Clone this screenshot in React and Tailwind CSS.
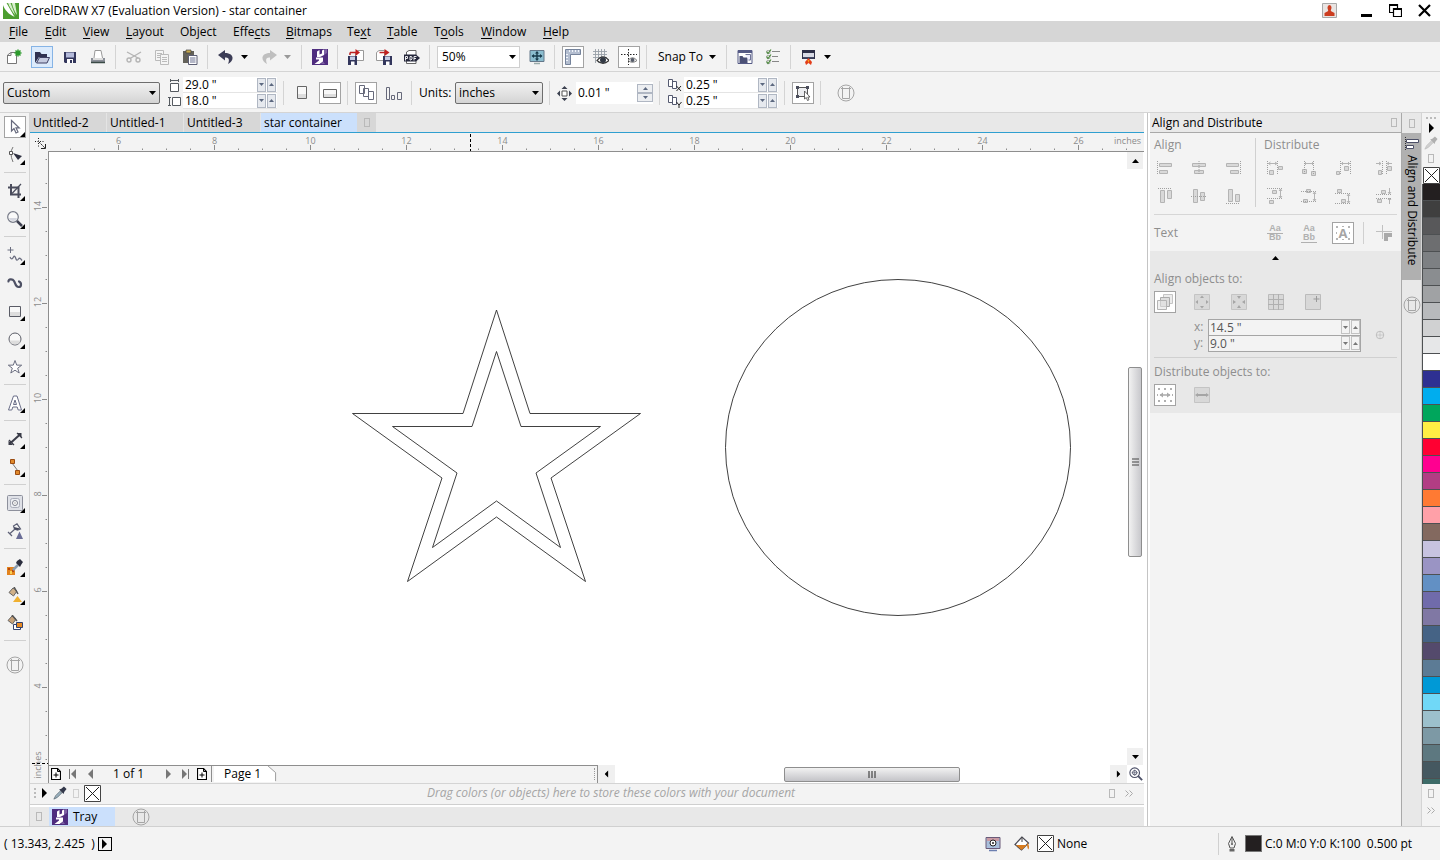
import React from "react";

/* ---------- small drawing helpers ---------- */

function Icon({ children, className = "size-4" }) {
  return (
    <svg viewBox="0 0 16 16" className={className + " shrink-0"} fill="none" aria-hidden="true">
      {children}
    </svg>
  );
}

function Caret({ dir = "down", className = "text-black" }) {
  const d = {
    down: "M0 0h7L3.5 4z",
    up: "M0 4h7L3.5 0z",
  }[dir];
  return (
    <svg viewBox="0 0 7 4" className={"h-1 w-[7px] shrink-0 " + className} aria-hidden="true">
      <path d={d} fill="currentColor" />
    </svg>
  );
}

function Side({ dir = "right", className = "text-black" }) {
  return (
    <svg viewBox="0 0 5 10" className={"h-2.5 w-[5px] shrink-0 " + className} aria-hidden="true">
      <path d={dir === "right" ? "M0 0v10l5-5z" : "M5 0v10L0 5z"} fill="currentColor" />
    </svg>
  );
}

function Sep() {
  return <div className="h-6 w-0.5 shrink-0 border-l border-[#d4d4d4]" />;
}

function Btn({ label, on, open, children }) {
  const look = open
    ? "border-[#86b4e6] bg-[#dcebfc]"
    : on
    ? "border-[#a3a3a3] bg-white"
    : "border-transparent";
  return (
    <button
      type="button"
      aria-label={label}
      className={"flex size-[22px] shrink-0 items-center justify-center border " + look}
    >
      {children}
    </button>
  );
}

function RoundMark() {
  return (
    <svg viewBox="0 0 18 18" className="size-[18px] shrink-0" fill="none" stroke="#a5a5a5" aria-hidden="true">
      <circle cx="9" cy="9" r="8" />
      <path d="M5.500 4.500h7v10h-7zM4 4.500h10M5.500 3v1.500M12.500 3v1.500" />
    </svg>
  );
}

function Slot() {
  return <span className="h-[9px] w-1.5 shrink-0 border border-[#b9b9b9]" />;
}

function NoColor({ className = "size-[17px]" }) {
  return (
    <svg viewBox="0 0 17 17" className={className + " shrink-0"} aria-hidden="true">
      <path d="M.5.5h16v16H.5z" fill="#fff" stroke="#444" />
      <path d="M2 2l13 13M15 2L2 15" stroke="#222" fill="none" />
    </svg>
  );
}

function Launcher() {
  return (
    <Icon>
      <path d="M0 0h16v16H0z" fill="#4f2d7f" />
      <path d="M5 2.500L7.500 1v4.500L10 4.500V1.500L12 .5v5.500L8 8H5z" fill="#fff" />
      <path d="M4 8.500h7v4L7.500 15H2.500l4.500-3.500v-1H4z" fill="#fff" />
      <path d="M12 .5L15 0v4l-3 2z" fill="#7d62a3" />
      <path d="M11 12.500l2 2.500H9z" fill="#7d62a3" />
    </Icon>
  );
}

/* ---------- title and menus ---------- */

function TitleBar() {
  return (
    <header className="flex h-[21px] shrink-0 items-center bg-white pl-[3px] pr-[9px]">
      <svg viewBox="0 0 16 16" className="mr-[5px] size-4" aria-hidden="true">
        <path d="M0 0h16v16H0z" fill="#4c9d2f" />
        <path d="M0 0h4l8 14C6 12 1 6 0 2z" fill="#fff" />
        <path d="M5 0h3l5 13C9 9 6 4 5 0zM9 0h3l2 12C11 8 9 4 9 0z" fill="#d8efcd" />
        <path d="M4 0l8 14M8 0l5 13" stroke="#4c9d2f" strokeWidth=".8" />
      </svg>
      <h1 className="flex-1">CorelDRAW X7 (Evaluation Version) - star container</h1>
      <svg viewBox="0 0 15 15" className="mr-[23px] size-[15px]" aria-hidden="true">
        <path d="M.5.5h14v14H.5z" fill="#e9e4e2" stroke="#a8a8a8" />
        <path d="M5.500 4.500a2 2.500 0 0 1 4 0c0 1.500-.7 2.300-.7 3.500l3.700 2v3h-10v-3l3.700-2c0-1.200-.7-2-.7-3.500z" fill="#cc3d20" />
      </svg>
      <div className="flex items-center gap-4">
        <button type="button" aria-label="Minimize">
          <svg viewBox="0 0 13 13" className="size-[13px]"><path d="M1 10h11v3H1z" /></svg>
        </button>
        <button type="button" aria-label="Restore">
          <svg viewBox="0 0 13 13" className="size-[13px]" fill="none" stroke="#000" strokeWidth="1.2">
            <path d="M4 8.500H.5v-8h8V4M4.500 4.500h8v8h-8z" /><path d="M0 1h9M4 5h9" strokeWidth="2" />
          </svg>
        </button>
        <button type="button" aria-label="Close">
          <svg viewBox="0 0 13 13" className="size-[13px]"><path d="M1 1l11 11M12 1L1 12" stroke="#000" strokeWidth="2.200" /></svg>
        </button>
      </div>
    </header>
  );
}

const MENUS = [
  ["", "F", "ile", "w-9"],
  ["", "E", "dit", "w-[38px]"],
  ["", "V", "iew", "w-[43px]"],
  ["", "L", "ayout", "w-[54px]"],
  ["Ob", "j", "ect", "w-[53px]"],
  ["Effe", "c", "ts", "w-[53px]"],
  ["", "B", "itmaps", "w-[61px]"],
  ["Te", "x", "t", "w-10"],
  ["", "T", "able", "w-[47px]"],
  ["T", "o", "ols", "w-[47px]"],
  ["", "W", "indow", "w-[62px]"],
  ["", "H", "elp", "w-9"],
];

function MenuBar() {
  return (
    <nav className="flex h-[21px] shrink-0 items-center bg-[#d6d6d6] pl-[9px]">
      {MENUS.map(([a, key, b, w]) => (
        <button key={a + key + b} type="button" className={"shrink-0 whitespace-nowrap text-left " + w}>
          {a}
          <span className="underline underline-offset-2">{key}</span>
          {b}
        </button>
      ))}
    </nav>
  );
}

/* ---------- standard toolbar ---------- */

function StandardBar() {
  return (
    <div className="flex h-[30px] shrink-0 items-center gap-1.5 border-b border-[#d4d4d4] bg-[#f3f3f3] pl-[3px] pt-px">
      <Btn label="New">
        <Icon>
          <path d="M1.500 14.500V6L5 3.500h5.500v11z" fill="#fff" stroke="#777" />
          <path d="M1.500 6.500h3.500v-3" stroke="#777" />
          <path d="M12 .5v7M8.500 4h7M9.500 1.500l5 5M14.500 1.500l-5 5" stroke="#2b9a2b" strokeWidth="1.500" />
        </Icon>
      </Btn>
      <Btn label="Open" open>
        <Icon>
          <path d="M1 14V3h5l1.500 2H13v3H5z" fill="#2f3150" />
          <path d="M5.500 8.500h10l-2.500 5.500H2.500z" fill="#c5cbe0" stroke="#3f4164" />
        </Icon>
      </Btn>
      <Btn label="Save">
        <Icon>
          <path d="M2 3h12v11H3l-1-1z" fill="#33365c" />
          <path d="M4 3.500h8v5H4z" fill="#b4bada" /><path d="M5 10h6v4H5z" fill="#fff" /><path d="M8 11h2v3H8z" fill="#33365c" />
        </Icon>
      </Btn>
      <Btn label="Print">
        <Icon>
          <path d="M4 9l1-7.500h6L12.500 9" fill="#fff" stroke="#999" />
          <path d="M1 9h14v4H1z" fill="#8b8f98" /><path d="M3 9h10v2H3z" fill="#ddd" /><path d="M1 13.500h14" stroke="#3a4a46" strokeWidth="1.500" />
        </Icon>
      </Btn>
      <Sep />
      <Btn label="Cut">
        <Icon>
          <g stroke="#b5b5b5" strokeWidth="1.400"><path d="M1 3l11 6M15 3L4 9.500" /><circle cx="3" cy="11" r="2" /><circle cx="12" cy="11" r="2" /></g>
        </Icon>
      </Btn>
      <Btn label="Copy">
        <Icon>
          <g stroke="#bbb"><path d="M1.500 1.500h8v10h-8z" fill="#f5f5f5" /><path d="M3 4.500h5M3 6.500h4M3 8.500h3" /><path d="M6.500 5.500h8v10h-8z" fill="#f5f5f5" /><path d="M8 8.500h5M8 10.500h5M8 12.500h5" /></g>
        </Icon>
      </Btn>
      <Btn label="Paste">
        <Icon>
          <path d="M1 2h11v12H1z" fill="#64625a" /><path d="M4 1h5v3H4z" fill="#c5a74c" stroke="#444" strokeWidth=".7" />
          <path d="M6.500 6.500h8.500v9H6.500z" fill="#fff" stroke="#5d5f75" /><path d="M8 9h5.500M8 11h5.500M8 13h5.500" stroke="#6b7190" />
        </Icon>
      </Btn>
      <Sep />
      <div className="flex w-[37px] items-center">
        <Btn label="Undo">
          <Icon><path d="M7 1L0 6l7 5.500V8.500c3.500-.5 5 1.500 3 6.500C16.500 12 16.500 4 7 4z" fill="#3c3d56" /></Icon>
        </Btn>
        <button type="button" aria-label="Undo list" className="flex w-[15px] justify-center"><Caret /></button>
      </div>
      <div className="flex w-[37px] items-center">
        <Btn label="Redo">
          <Icon><path d="M9 1l7 5-7 5.500V8.500c-3.500-.5-5 1.500-3 6.500C-.5 12-.5 4 9 4z" fill="#bfbfbf" /></Icon>
        </Btn>
        <button type="button" aria-label="Redo list" className="flex w-[15px] justify-center"><Caret className="text-[#999]" /></button>
      </div>
      <Sep />
      <Btn label="Search content"><Launcher /></Btn>
      <Sep />
      <Btn label="Import">
        <Icon>
          <path d="M7.500 11.500v-8L10 1.500h5.500v10z" fill="#fff" stroke="#999" />
          <path d="M0 7h9v9H0z" fill="#33365c" /><path d="M2 7.500h5V11H2z" fill="#c4cae2" /><path d="M3 12.500h3.500V16H3z" fill="#fff" />
          <path d="M2 3.500V6M2 3.500h6" stroke="#b22" strokeWidth="1.500" /><path d="M7.500 0l4.500 3.500L7.500 7z" fill="#c01f1f" />
        </Icon>
      </Btn>
      <Btn label="Export">
        <Icon>
          <path d="M.5 11.500v-8L3 1.500h5.500v10z" fill="#fff" stroke="#999" />
          <path d="M7 7h9v9H7z" fill="#33365c" /><path d="M9 7.500h5V11H9z" fill="#c4cae2" /><path d="M10 12.500h3.500V16H10z" fill="#fff" />
          <path d="M3.500 3.500h6" stroke="#b22" strokeWidth="1.500" /><path d="M8.500 0l5 3.500-5 3.500z" fill="#c01f1f" />
        </Icon>
      </Btn>
      <Btn label="Publish to PDF">
        <Icon>
          <path d="M2.500 14.500V3L5 1.500h7v13z" fill="#fff" stroke="#666" />
          <path d="M0 5.500h12l4 3.500-4 3.500H0z" fill="#26283c" />
          <path d="M1.500 11.500v-4h2v2h-2M6 7.500v3.500h1l1-1V8L7 7.500zM10 11.500v-4h2.500M10 9.500h2" stroke="#fff" strokeWidth=".9" />
        </Icon>
      </Btn>
      <Sep />
      <div className="relative h-[22px] w-[83px] shrink-0">
        <select aria-label="Zoom level" className="h-full w-full appearance-none border border-[#cfcfcf] bg-white pl-1">
          <option>50%</option>
        </select>
        <span className="pointer-events-none absolute inset-y-0 right-1 flex items-center"><Caret /></span>
      </div>
      <Btn label="Full-screen preview">
        <Icon>
          <path d="M1 1.500h14v11H1z" fill="#8bbdcf" stroke="#64788a" /><path d="M5 14.500h6" stroke="#9aa" strokeWidth="1.500" />
          <path d="M8 3v8M3.500 7h9" stroke="#173a4b" strokeWidth="1.400" />
          <path d="M8 2L6 4.500h4zM8 12l-2-2.500h4zM2.500 7L5 5v4zM13.500 7L11 5v4z" fill="#173a4b" />
        </Icon>
      </Btn>
      <Sep />
      <Btn label="Show rulers" on>
        <Icon>
          <path d="M.5.5h15v5h-10v10h-5z" fill="#b4bed0" stroke="#75839b" />
          <path d="M4.500 1v2M7.500 1v2M10.500 1v2M13.500 1v2M1 5.500h2M1 8.500h2M1 11.500h2" stroke="#f0f4fa" />
        </Icon>
      </Btn>
      <Btn label="Show grid">
        <Icon>
          <path d="M2.500 0v14M5.500 0v14M8.500 0v14M11.500 0v14M0 2.500h14M0 5.500h14M0 8.500h14" stroke="#98a0a8" strokeWidth=".9" />
          <path d="M4 11.500Q10 4 16 11.500 10 17 4 11.500z" fill="#fff" stroke="#333" strokeWidth="1.200" /><circle cx="10" cy="11" r="3" fill="#333a45" />
        </Icon>
      </Btn>
      <Btn label="Show guidelines" on>
        <Icon>
          <path d="M7.500 0v16M0 5.500h16" stroke="#222" strokeDasharray="1.500 1.500" />
          <path d="M7 11.500Q11.500 6 16 11.500 11.500 15 7 11.500z" fill="#fff" stroke="#777" /><circle cx="11.500" cy="11" r="2" fill="#555b68" />
        </Icon>
      </Btn>
      <Sep />
      <button type="button" className="flex w-[66px] shrink-0 items-center justify-between whitespace-nowrap pl-1 pr-1">
        Snap To <Caret className="text-black" />
      </button>
      <Sep />
      <Btn label="Options">
        <Icon>
          <path d="M1 1.500h14v13H1z" fill="#fff" stroke="#555a85" /><path d="M1 1h14v3H1z" fill="#555a85" />
          <path d="M2.500 7h3l1 1.500h4V14h-8z" fill="#4b5076" /><path d="M8.500 5.500h5V11h-2" stroke="#6e7396" fill="#eef" />
        </Icon>
      </Btn>
      <Btn label="Checklist">
        <Icon>
          <path d="M7 2.500h8M7 7.500h6M7 12.500h7" stroke="#888" />
          <path d="M2 1.500h3v3H2zM2 6.500h3v3H2zM2 11.500h3v3H2z" stroke="#999" strokeWidth=".7" />
          <path d="M1.500 2.500L3 4.500 6 .5M1.500 7.500L3 9.500l3-4M1.500 12.500L3 14.500l3-4" stroke="#4b8a3c" strokeWidth="1.200" />
        </Icon>
      </Btn>
      <Sep />
      <div className="flex items-center">
        <Btn label="Application launcher">
          <Icon>
            <path d="M1 1h13v9H1z" fill="#2d3048" /><path d="M2 4h11v4H2z" fill="#d8dbe6" /><path d="M2 8h11v1.500H2z" fill="#444a66" />
            <path d="M7.500 9l3.500 4-1 3-2.500-2L5 16l-1-3z" fill="#e23d1a" /><path d="M6.500 11h2l-1 3z" fill="#f7a21b" />
          </Icon>
        </Btn>
        <button type="button" aria-label="Application list" className="flex w-[15px] justify-center"><Caret /></button>
      </div>
    </div>
  );
}

/* ---------- property bar ---------- */

function Spin({ muted }) {
  const box = "flex h-3.5 w-[9px] items-center justify-center border overflow-hidden ";
  const look = muted ? "border-[#c2c2c2] bg-[#f3f3f3]" : "border-[#b0b7c3] bg-[#e6e9ee]";
  const color = muted ? "text-[#777]" : "text-[#5c6880]";
  return (
    <span className="flex shrink-0 gap-px">
      <button type="button" aria-label="Decrease" className={box + look}>
        <svg viewBox="0 0 5 3" className={"h-[3px] w-[5px] shrink-0 " + color}><path d="M0 0h5L2.500 3z" fill="currentColor" /></svg>
      </button>
      <button type="button" aria-label="Increase" className={box + look}>
        <svg viewBox="0 0 5 3" className={"h-[3px] w-[5px] shrink-0 " + color}><path d="M0 3h5L2.500 0z" fill="currentColor" /></svg>
      </button>
    </span>
  );
}

function PairField({ label, value, icon }) {
  return (
    <div className="flex h-4 items-center">
      {icon}
      <div className="ml-auto flex h-full w-[94px] items-center border-b border-[#e4e4e4] bg-white pr-px">
        <input aria-label={label} defaultValue={value} className="h-full w-full min-w-0 bg-transparent pl-0.5 outline-none" />
        <Spin />
      </div>
    </div>
  );
}

function DarkSelect({ label, value, width }) {
  return (
    <div className={"relative h-[22px] shrink-0 " + width}>
      <select
        aria-label={label}
        className="h-full w-full appearance-none rounded-xs border border-[#6e6e6e] bg-linear-to-b from-[#f1f1f1] to-[#d4d4d4] pl-[3px]"
      >
        <option>{value}</option>
      </select>
      <span className="pointer-events-none absolute inset-y-0 right-1 flex items-center"><Caret /></span>
    </div>
  );
}

function DupIcon({ axis }) {
  return (
    <svg viewBox="0 0 15 14" className="h-3.5 w-[15px]" fill="none" stroke="#555a70" aria-hidden="true">
      <path d="M1.500 1.500h4v7h-4zM5.500 3.500h4v7h-4z" fill="#fff" />
      {axis === "x" ? <path d="M9.500 8l4.500 5M14 8l-4.500 5" stroke="#222" /> : <path d="M9.500 8l2.500 3 2.500-3M12 11v3" stroke="#222" />}
    </svg>
  );
}

function PropertyBar() {
  return (
    <div className="flex h-[41px] shrink-0 items-center gap-1.5 border-b border-[#d4d4d4] bg-[#f3f3f3] pl-[3px] pt-0.5">
      <DarkSelect label="Page size" value="Custom" width="w-[157px]" />
      <div className="ml-0.5 w-[109px] shrink-0">
        <PairField
          label="Page width"
          value={'29.0 "'}
          icon={
            <svg viewBox="0 0 13 13" className="size-[13px]" fill="none" stroke="#555a60" aria-hidden="true">
              <path d="M2.500 4.500h8v8h-8z" fill="#fff" /><path d="M2.500 0v3M10.500 0v3M2.500 1.500h8" />
            </svg>
          }
        />
        <PairField
          label="Page height"
          value={'18.0 "'}
          icon={
            <svg viewBox="0 0 13 13" className="size-[13px]" fill="none" stroke="#555a60" aria-hidden="true">
              <path d="M4.500 2.500h8v8h-8z" fill="#fff" /><path d="M0 2.500h3M0 10.500h3M1.500 2.500v8" />
            </svg>
          }
        />
      </div>
      <Sep />
      <Btn label="Portrait">
        <Icon><path d="M3.500 1.500h9v12h-9z" fill="#f8f8f8" stroke="#666" /><path d="M4 9h8v4H4z" fill="#ddd" /></Icon>
      </Btn>
      <Btn label="Landscape" on>
        <Icon><path d="M1.500 4.500h13v8h-13z" fill="#f8f8f8" stroke="#666" /><path d="M2 9h12v3H2z" fill="#ddd" /></Icon>
      </Btn>
      <Sep />
      <Btn label="All pages" on>
        <Icon><path d="M1.500.5h5v8h-5zM5.500 3.500h5v8h-5zM10.500 6.500h5v8h-5z" fill="#fff" stroke="#66697a" /></Icon>
      </Btn>
      <Btn label="Current page">
        <Icon><path d="M.5 2.500h3v12h-3zM5.500 10.500h3v4h-3zM11.500 7.500h4v7h-4z" fill="#f4f4f4" stroke="#66697a" /></Icon>
      </Btn>
      <Sep />
      <label className="flex w-[124px] shrink-0 items-center justify-between">
        Units:
        <DarkSelect label="Units" value="inches" width="w-[88px]" />
      </label>
      <Sep />
      <div className="flex w-24 shrink-0 items-center justify-between">
        <svg viewBox="0 0 15 15" className="size-[15px]" fill="none" aria-hidden="true">
          <path d="M5 5h5v5H5z" stroke="#555" fill="#fff" />
          <path d="M7.500 0l3 3h-6zM7.500 15l3-3h-6zM0 7.500l3-3v6zM15 7.500l-3-3v6z" fill="#3c4150" />
        </svg>
        <div className="flex h-[22px] w-[77px] items-center bg-white">
          <input aria-label="Nudge distance" defaultValue={'0.01 "'} className="w-full min-w-0 bg-transparent pl-0.5 outline-none" />
          <span className="flex shrink-0 flex-col">
            <button type="button" aria-label="Increase" className="flex h-[9px] w-4 items-center justify-center border border-[#b0b7c3] bg-[#eceef1]">
              <svg viewBox="0 0 5 3" className="h-[3px] w-[5px]"><path d="M0 3h5L2.500 0z" fill="#5c6880" /></svg>
            </button>
            <button type="button" aria-label="Decrease" className="flex h-[9px] w-4 items-center justify-center border border-[#b0b7c3] bg-[#eceef1]">
              <svg viewBox="0 0 5 3" className="h-[3px] w-[5px]"><path d="M0 0h5L2.500 3z" fill="#5c6880" /></svg>
            </button>
          </span>
        </div>
      </div>
      <Sep />
      <div className="w-[111px] shrink-0">
        <PairField label="Duplicate distance x" value={'0.25 "'} icon={<DupIcon axis="x" />} />
        <PairField label="Duplicate distance y" value={'0.25 "'} icon={<DupIcon axis="y" />} />
      </div>
      <Sep />
      <Btn label="Treat as filled" on>
        <Icon>
          <path d="M2.500 2.500h10v9h-10z" stroke="#555" fill="#ecedf0" />
          <path d="M1 1h3v3H1zM11 1h3v3h-3zM1 10h3v3H1z" fill="#4a4d5c" />
          <path d="M9.500 6v8l1.800-1.500 1.200 3 1.500-.7-1.200-2.800h2.200z" fill="#fff" stroke="#444" strokeWidth=".8" />
        </Icon>
      </Btn>
      <Sep />
      <span className="ml-[9px] flex"><RoundMark /></span>
    </div>
  );
}

/* ---------- toolbox ---------- */

function Tool({ label, on, fly = true, children }) {
  return (
    <button
      type="button"
      aria-label={label}
      className={
        "relative flex size-[22px] shrink-0 items-center justify-center border " +
        (on ? "border-[#a3a3a3] bg-white" : "border-transparent")
      }
    >
      {children}
      {fly && (
        <svg viewBox="0 0 5 5" className="absolute bottom-0 right-0 size-[5px]" aria-hidden="true">
          <path d="M5 0v5H0z" fill="#000" />
        </svg>
      )}
    </button>
  );
}

function ToolSep() {
  return <div className="h-0.5 w-[22px] shrink-0 border-t border-[#d0d0d0]" />;
}

function Toolbox() {
  return (
    <aside className="flex w-[30px] shrink-0 flex-col items-center gap-1.5 border-r border-[#d4d4d4] pt-[3px]">
      <Tool label="Pick" on>
        <Icon><path d="M4.500 1.500v10.500l2.500-2.500L9 14l2-1-2-4.200h3.200z" fill="#fff" stroke="#66697c" strokeWidth="1.200" /></Icon>
      </Tool>
      <Tool label="Shape">
        <Icon>
          <path d="M6 0Q2 6 6 15" stroke="#777" /><path d="M2.500 4.500h3v3h-3z" fill="#fff" stroke="#555" />
          <path d="M6 6l9 3-4 4z" fill="#2e3040" />
        </Icon>
      </Tool>
      <ToolSep />
      <Tool label="Crop">
        <Icon><path d="M4 1v10.500h10M1 4.500h10.500V15" stroke="#4a4c5c" strokeWidth="2" /><path d="M14 1L5 10.500" stroke="#4a4c5c" strokeWidth="1.200" /></Icon>
      </Tool>
      <Tool label="Zoom">
        <Icon>
          <circle cx="6" cy="6" r="5.300" fill="#fafafa" stroke="#777b88" strokeWidth="1.200" /><path d="M2 7h8q-1 3-4 3T2 7z" fill="#d5d7e0" />
          <path d="M10 10l5 5" stroke="#3d4050" strokeWidth="2.500" />
        </Icon>
      </Tool>
      <ToolSep />
      <Tool label="Freehand">
        <Icon><path d="M3.500 0v6M.5 3h6" stroke="#6b6e80" /><path d="M3 10c1.500 3 2.500 2 3.500 0s2 .5 2.500 2 1.500 1.500 2.500 0 2-.5 3.500 1.500" stroke="#6b6e80" strokeWidth="1.300" /></Icon>
      </Tool>
      <Tool label="Artistic media" fly={false}>
        <Icon><path d="M1.500 6.500c-.5-2.500 4-3 5.500-.5s1.500 6 4.500 6 3.500-4 .5-5.500" stroke="#4d5064" strokeWidth="2.200" strokeLinecap="round" /></Icon>
      </Tool>
      <Tool label="Rectangle">
        <Icon><path d="M2.500 3.500h11v10h-11z" fill="#f8f8f8" stroke="#5a5c66" /><path d="M3 9h10v4H3z" fill="#ddd" /></Icon>
      </Tool>
      <Tool label="Ellipse">
        <Icon><circle cx="8" cy="8" r="6" fill="#f8f8f8" stroke="#5a5c66" /><path d="M2.500 9.500h11q-1 4-5.500 4t-5.500-4z" fill="#ddd" /></Icon>
      </Tool>
      <Tool label="Polygon">
        <Icon><path d="M8 1.500l1.700 4.600 5 .1-4 3 1.500 4.800L8 11.200 3.800 14l1.500-4.800-4-3 5-.1z" fill="#fff" stroke="#6b6e80" /></Icon>
      </Tool>
      <ToolSep />
      <Tool label="Text">
        <Icon><path d="M6.500 1h3.500l4.500 14h-3.300l-1-3H5.800l-1 3H1.500zM8 5l-1.500 4.500h3z" fill="#fff" stroke="#6a6e88" /></Icon>
      </Tool>
      <ToolSep />
      <Tool label="Dimension">
        <Icon><path d="M3 12.500L13 3.500" stroke="#3a3c48" strokeWidth="2" /><path d="M2 9l5 5M10 2l5 5" stroke="#3a3c48" strokeWidth="1.200" /><path d="M1.500 14v-4.500L6 14zM14.500 2v4.500L10 2z" fill="#3a3c48" /></Icon>
      </Tool>
      <Tool label="Connector">
        <Icon><path d="M5 4l6 8" stroke="#777" /><path d="M3.500.5h4v4h-4zM8.500 11.500h4v4h-4z" fill="#e08a2c" stroke="#9b4c12" /></Icon>
      </Tool>
      <ToolSep />
      <Tool label="Contour">
        <Icon>
          <rect x=".5" y=".5" width="15" height="15" rx="1" fill="#dfe1e7" stroke="#8d909c" /><rect x="3.500" y="3.500" width="9" height="9" rx="2" fill="#eceef2" stroke="#aaaebb" />
          <circle cx="8" cy="8" r="2.500" fill="#fff" stroke="#80838f" /><path d="M7.500 7.500h1v1h-1z" fill="#666" />
        </Icon>
      </Tool>
      <Tool label="Transparency" fly={false}>
        <Icon><path d="M6.500 3L10 .8 13.500 6l-3 1L7.500 6zM8 6L3 10.500M1 9l4 4" stroke="#5d6076" strokeWidth="1.200" /><path d="M7 4l6 1.500-2.500 1.500-3-1z" fill="#44475c" /><path d="M12.500 8.500L16 16H9z" fill="#6a6d96" /></Icon>
      </Tool>
      <ToolSep />
      <Tool label="Color eyedropper">
        <Icon>
          <path d="M0 8h8v8H0z" fill="#e3831c" /><path d="M1 9h2v2H1zM5 11h2v2H5z" fill="#b6480e" /><path d="M3 12h2v3H3z" fill="#f8cf52" />
          <path d="M6 11l5-5" stroke="#8a9caf" strokeWidth="2.500" /><path d="M9 4l4 4 1-2 2-3-3-3-3 2z" fill="#2b2e3e" />
        </Icon>
      </Tool>
      <Tool label="Interactive fill">
        <Icon>
          <path d="M6 1L2 5.500 6.500 9 10 4z" fill="#d0b088" stroke="#666" /><path d="M7 0l4 7" stroke="#555" strokeWidth="1.500" />
          <path d="M10.500 9L15 15H6z" fill="#f0b030" />
        </Icon>
      </Tool>
      <Tool label="Smart fill" fly={false}>
        <Icon>
          <path d="M5 1L1 5.500 5.500 9 9 4z" fill="#c7a27a" stroke="#666" /><path d="M5 0l5 6" stroke="#555" strokeWidth="1.500" />
          <path d="M6.500 9.500h7v5h-7z" fill="#fff" stroke="#33406c" /><path d="M9.500 7.500h6v5h-6z" fill="#e78a22" stroke="#33406c" />
        </Icon>
      </Tool>
      <ToolSep />
      <span className="mt-2 flex"><RoundMark /></span>
    </aside>
  );
}

/* ---------- document area ---------- */

const TABS = ["Untitled-2", "Untitled-1", "Untitled-3"];

function DocTabs() {
  return (
    <div className="flex h-5 shrink-0 border-b border-[#2f9fd0] bg-[#e8e8e8]">
      {TABS.map((t) => (
        <button key={t} type="button" className="w-[77px] border-r border-[#e4e4e4] bg-[#d7d7d7] pl-[3px] text-left">{t}</button>
      ))}
      <button type="button" className="w-24 bg-[#cbe0fc] pl-[3px] text-left">star container</button>
      <span className="flex w-[19px] items-center justify-center bg-[#d7d7d7]"><Slot /></span>
    </div>
  );
}

const H_MARKS = Array.from({ length: 47 }, (_, i) => ({ x: 22.5 + i * 24, n: i }));
const V_MARKS = Array.from({ length: 27 }, (_, i) => ({ y: 7.5 + i * 24, n: i }));

function TopRuler() {
  return (
    <div className="flex h-[19px] shrink-0 bg-[#f3f3f3]">
      <div className="flex w-[18px] shrink-0 items-center justify-center pl-1 pt-0.5">
        <svg viewBox="0 0 12 12" className="size-3" fill="none" stroke="#222" aria-hidden="true">
          <path d="M0 3.500h9M3.500 0v9" strokeDasharray="1 1.500" /><path d="M4 4l6 6" strokeDasharray="2 1" /><path d="M10.500 6v4.500H6" />
        </svg>
      </div>
      <div className="relative h-full min-w-0 flex-1 border-b border-[#8e8e8e]">
        <svg className="block h-full w-full" aria-hidden="true">
          {H_MARKS.map(({ x, n }) => (
            <path key={n} d={(n - 2) % 4 === 0 ? `M${x} 12v5` : `M${x} 15.500v1.500`} stroke="#8c8c8c" />
          ))}
          {[6, 8, 10, 12, 14, 16, 18, 20, 22, 24, 26].map((v, i) => (
            <text key={v} x={70.5 + i * 96} y="11" textAnchor="middle" fontSize="9" fill="#8c8c8c">{v}</text>
          ))}
          <path d="M422.500 1v17" stroke="#000" strokeDasharray="3 2" />
        </svg>
        <span className="absolute right-[3px] top-px bg-[#f3f3f3] pl-1 text-[9px] leading-3.5 text-[#8c8c8c]">inches</span>
      </div>
    </div>
  );
}

function SideRuler() {
  return (
    <div className="w-[19px] shrink-0 border-r border-[#8e8e8e] bg-[#f3f3f3]">
      <svg className="block h-full w-full" aria-hidden="true">
        {V_MARKS.map(({ y, n }) => {
          const major = (n - 2) % 4 === 0;
          return <path key={n} d={major ? `M12 ${y}h5` : `M15.500 ${y}h1.500`} stroke="#8c8c8c" />;
        })}
        {[14, 12, 10, 8, 6, 4].map((v, i) => (
          <text key={v} transform={`translate(11 ${54 + i * 96}) rotate(-90)`} textAnchor="middle" fontSize="9" fill="#8c8c8c">{v}</text>
        ))}
        <text transform="translate(11 613) rotate(-90)" textAnchor="middle" fontSize="9" fill="#8c8c8c">inches</text>
        <path d="M2 611.500h16" stroke="#000" strokeDasharray="3 2" />
      </svg>
    </div>
  );
}

function Canvas() {
  return (
    <div className="flex min-h-0 flex-1 bg-white">
      <svg className="h-full min-w-0 flex-1" fill="none" stroke="#2b2b2b" strokeWidth=".9" role="img" aria-label="Star and circle">
        <g transform="translate(-49 -152)">
          <path d="M496.500 310L530 413.500H640.500L551 478l34.500 103.500-89-64.500-89 64.500L442 478l-89.500-64.500H463z" />
          <path d="M496.500 351.500L521 426.500h79.500L536 473l24.500 74.500-64-46.500-64 46.500L457 473l-64.500-46.500H472z" />
          <ellipse cx="898" cy="447.500" rx="172.500" ry="168" />
        </g>
      </svg>
      <div className="mr-px flex w-4 shrink-0 flex-col items-center">
        <button type="button" aria-label="Scroll up" className="flex h-[17px] w-4 items-center justify-center bg-[#f0f0f0]"><Caret dir="up" /></button>
        <div className="w-full grow-[199]" />
        <div className="flex h-[190px] w-3.5 items-center justify-center rounded-xs border border-[#8e8e8e] bg-linear-to-r from-[#f2f2f2] to-[#c8c8cc]">
          <svg viewBox="0 0 7 8" className="h-2 w-[7px]" aria-hidden="true"><path d="M0 1h7M0 4h7M0 7h7" stroke="#444" strokeWidth="1.200" /></svg>
        </div>
        <div className="w-full grow-[191]" />
        <button type="button" aria-label="Scroll down" className="flex h-[17px] w-4 items-center justify-center bg-[#f0f0f0]"><Caret /></button>
      </div>
    </div>
  );
}

function AddPage() {
  return (
    <svg viewBox="0 0 10 12" className="h-3 w-2.5 shrink-0" fill="none" stroke="#000" aria-hidden="true">
      <path d="M.5.5h6l3 3v8h-9z" fill="#fff" strokeWidth="1.200" /><path d="M6.500.5v3h3M5 4.500v5M2.500 7h5" />
    </svg>
  );
}

function PageNav() {
  return (
    <div className="flex h-[18px] shrink-0 bg-white">
      <div className="flex w-[549px] shrink-0 items-center border-r border-t border-[#8e8e8e] bg-[#f3f3f3] pb-px pl-0.5 pr-0.5">
        <button type="button" aria-label="Add page before"><AddPage /></button>
        <button type="button" aria-label="First page" className="ml-2 flex items-center gap-px">
          <span className="h-2.5 w-px bg-[#777]" /><Side dir="left" className="text-[#777]" />
        </button>
        <button type="button" aria-label="Previous page" className="ml-3"><Side dir="left" className="text-[#777]" /></button>
        <span className="ml-5 w-[53px]">1 of 1</span>
        <button type="button" aria-label="Next page"><Side className="text-[#777]" /></button>
        <button type="button" aria-label="Last page" className="ml-[11px] flex items-center gap-px">
          <Side className="text-[#777]" /><span className="h-2.5 w-px bg-[#777]" />
        </button>
        <button type="button" aria-label="Add page after" className="ml-2"><AddPage /></button>
        <button type="button" className="relative ml-1 h-full w-[67px] border-l border-[#8e8e8e] text-left">
          <svg viewBox="0 0 66 17" className="absolute inset-0 h-full w-full" aria-hidden="true">
            <path d="M0 0h57l8 7v10H0z" fill="#fff" /><path d="M57.500 0l8 7v9" fill="none" stroke="#999" />
          </svg>
          <span className="relative pl-3">Page 1</span>
        </button>
        <span className="ml-auto h-3 w-px border-l border-dotted border-[#999]" />
      </div>
      <div className="flex min-w-0 flex-1 items-center">
        <button type="button" aria-label="Scroll left" className="flex h-full w-[17px] items-center justify-center bg-[#f0f0f0]"><Side dir="left" className="scale-75 text-black" /></button>
        <div className="grow-[170]" />
        <div className="flex h-[15px] w-44 items-center justify-center rounded-xs border border-[#8e8e8e] bg-linear-to-b from-[#f2f2f2] to-[#c4c4c8]">
          <svg viewBox="0 0 8 7" className="h-[7px] w-2" aria-hidden="true"><path d="M1 0v7M4 0v7M7 0v7" stroke="#444" strokeWidth="1.200" /></svg>
        </div>
        <div className="grow-[150]" />
        <button type="button" aria-label="Scroll right" className="flex h-full w-[17px] items-center justify-center bg-[#f0f0f0]"><Side className="scale-75 text-black" /></button>
        <button type="button" aria-label="Navigator" className="flex w-[17px] justify-center">
          <Icon className="size-3.5">
            <circle cx="6.500" cy="6.500" r="5.500" stroke="#4c5068" strokeWidth="1.300" fill="#fff" /><circle cx="6.500" cy="6.500" r="2.500" stroke="#4c5068" />
            <path d="M3 6.500h7M6.500 3v7" stroke="#4c5068" strokeWidth=".7" /><path d="M10.500 10.500L15 15" stroke="#4c5068" strokeWidth="2.200" />
          </Icon>
        </button>
      </div>
    </div>
  );
}

function Eyedropper({ dim }) {
  return (
    <Icon className="size-3.5">
      <path d="M1 15l2-4 5-5 2 2-5 5z" fill={dim ? "#d0d0d0" : "#9ab0bd"} stroke={dim ? "#bbb" : "#53636d"} strokeWidth=".8" />
      <path d="M7 4l5 5 1-2.500 2.500-3-3-3-3 2.500z" fill={dim ? "#b0b0b0" : "#33384a"} />
    </Icon>
  );
}

function DocumentPalette() {
  return (
    <div className="flex h-[21px] shrink-0 items-center border-t border-[#d4d4d4] bg-[#f3f3f3] pb-0.5 pl-1 pr-[11px]">
      <span className="h-2.5 border-l-2 border-dotted border-[#bbb]" />
      <button type="button" aria-label="Palette menu" className="ml-1.5"><Side /></button>
      <button type="button" aria-label="Eyedropper" className="ml-1.5"><Eyedropper /></button>
      <span className="ml-1.5 flex opacity-60"><Slot /></span>
      <button type="button" aria-label="No color" className="ml-[5px]"><NoColor /></button>
      <p className="flex-1 pl-3 text-center italic text-[#a5a5a5]">
        Drag colors (or objects) here to store these colors with your document
      </p>
      <Slot />
      <svg viewBox="0 0 8 7" className="ml-2.5 h-[7px] w-2" fill="none" stroke="#aaa" aria-hidden="true"><path d="M.5.5l3 3-3 3M4.500.5l3 3-3 3" /></svg>
    </div>
  );
}

function Tray() {
  return (
    <div className="shrink-0 border-t border-[#cfcfcf] bg-white pt-0.5">
      <div className="flex h-[19px] items-center bg-[#e8e8e8] pl-1.5">
        <Slot />
        <button type="button" className="ml-[7px] flex h-full w-[66px] items-center gap-[5px] bg-[#cbe0fc] pl-[3px]">
          <Launcher /> Tray
        </button>
        <span className="ml-[17px] flex"><RoundMark /></span>
      </div>
    </div>
  );
}

/* ---------- align and distribute docker ---------- */

const G = "#b4b4b4";
const F = "#d9d9d9";

function Glyph({ d, lines, dots }) {
  return (
    <Icon>
      <path d={d} fill={F} stroke={G} />
      {lines && <path d={lines} stroke={G} />}
      {dots && <path d={dots} stroke="#a0a0a0" strokeDasharray="1 1" />}
    </Icon>
  );
}

const ALIGN = [
  [
    ["Align left", { d: "M2.500 3.500h12v3h-12zM2.500 10.500h8v3h-8z", dots: "M.5 1v14" }],
    ["Align center horizontally", { d: "M1.500 3.500h13v3h-13zM3.500 10.500h9v3h-9z", dots: "M8 1v14" }],
    ["Align right", { d: "M1.500 3.500h12v3h-12zM5.500 10.500h8v3h-8z", dots: "M15.500 1v14" }],
  ],
  [
    ["Align top", { d: "M3.500 2.500h4v12h-4zM10.500 2.500h4v8h-4z", dots: "M1 .5h14" }],
    ["Align center vertically", { d: "M2.500 1.500h4v13h-4zM9.500 4.500h4v8h-4z", dots: "M0 8.500h16" }],
    ["Align bottom", { d: "M3.500 1.500h4v12h-4zM10.500 6.500h4v7h-4z", dots: "M1 15.500h14" }],
  ],
];

const DISTRIBUTE = [
  [
    ["Distribute left", { d: "M2.500 10.500h4v4h-4zM11.500 6.500h4v3h-4z", lines: "M1 3.500h9M3.500 2L1.500 3.500l2 1.500M8 2l2 1.500L8 5", dots: "M.5 1v14M10.500 1v14" }],
    ["Distribute center horizontally", { d: "M1.500 9.500h4v4h-4zM10.500 11.500h4v4h-4z", lines: "M3 3.500h10M5 2L3.500 3.500 5 5M11 2l1.500 1.500L11 5", dots: "M3.500 1v14M12.500 1v14" }],
    ["Distribute right", { d: "M1.500 11.500h3v3h-3zM9.500 6.500h4v4h-4z", lines: "M6 3.500h9M8 2L6.500 3.500 8 5M13 2l1.500 1.500L13 5", dots: "M5.500 1v14M15.500 1v14" }],
    ["Distribute spacing horizontally", { d: "M2.500 10.500h3v4h-3zM11.500 6.500h4v4h-4z", lines: "M0 3.500h5M11 3.500h5M3 2l2 1.500L3 5M13 2l-2 1.500L13 5", dots: "M6.500 1v14M10.500 1v14" }],
  ],
  [
    ["Distribute top", { d: "M5.500 2.500h4v3h-4zM2.500 12.500h4v3h-4z", lines: "M13.500 1v9M12 3l1.500-2L15 3M12 8l1.500 2L15 8", dots: "M0 .5h16M0 10.500h16" }],
    ["Distribute center vertically", { d: "M5.500 1.500h4v3h-4zM2.500 11.500h4v3h-4z", lines: "M13.500 4v9M12 6l1.500-2L15 6M12 11l1.500 2L15 11", dots: "M0 3.500h16M0 13.500h16" }],
    ["Distribute bottom", { d: "M2.500 1.500h4v3h-4zM6.500 11.500h4v3h-4z", lines: "M13.500 6v9M12 8l1.500-2L15 8M12 13l1.500 2L15 13", dots: "M0 5.500h16M0 15.500h16" }],
    ["Distribute spacing vertically", { d: "M5.500 2.500h4v3h-4zM1.500 11.500h4v3h-4z", lines: "M13.500 0v6M13.500 10v6M12 4l1.500 2L15 4M12 12l1.500-2L15 12", dots: "M0 6.500h16M0 10.500h16" }],
  ],
];

function GlyphButton({ item }) {
  return (
    <button type="button" aria-label={item[0]} className="flex size-[22px] items-center justify-center">
      <Glyph {...item[1]} />
    </button>
  );
}

function TextAlignIcon({ mode }) {
  return (
    <span className="relative flex w-4 flex-col items-center font-['Liberation_Sans',sans-serif] text-[9px] font-bold leading-none text-[#b0b0b0]">
      <span>Aa</span>
      <span>Bb</span>
      <span className={"absolute inset-x-0 h-px bg-[#b0b0b0] " + (mode === "first" ? "top-[9px]" : "-bottom-px")} />
    </span>
  );
}

function Docker() {
  return (
    <aside className="flex w-[251px] shrink-0 flex-col bg-[#f3f3f3] text-[#8e8e8e]">
      <div className="flex h-5 shrink-0 items-center border-b border-[#a9a9a9] bg-[#e9e9e9] pl-0.5 text-black">
        <h2 className="flex-1">Align and Distribute</h2>
        <span className="mr-1 flex"><Slot /></span>
      </div>
      <div className="px-1">
        <div className="flex border-b border-[#d6d6d6] pb-[7px] pt-[5px]">
          <div className="w-[102px] border-r border-[#d0d0d0]">
            <h3 className="h-[19px] leading-3.5">Align</h3>
            {ALIGN.map((row, i) => (
              <div key={i} className={"flex gap-3 " + (i ? "mt-1.5" : "")}>
                {row.map((item) => <GlyphButton key={item[0]} item={item} />)}
              </div>
            ))}
          </div>
          <div className="pl-2">
            <h3 className="h-[19px] leading-3.5">Distribute</h3>
            {DISTRIBUTE.map((row, i) => (
              <div key={i} className={"flex gap-3 " + (i ? "mt-1.5" : "")}>
                {row.slice(0, 3).map((item) => <GlyphButton key={item[0]} item={item} />)}
                <span className="ml-[7px] flex"><GlyphButton item={row[3]} /></span>
              </div>
            ))}
          </div>
        </div>
        <div className="flex h-9 items-center">
          <h3 className="w-[110px]">Text</h3>
          <div className="flex items-center gap-3">
            <button type="button" aria-label="First line baseline" className="flex size-[22px] items-center justify-center"><TextAlignIcon mode="first" /></button>
            <button type="button" aria-label="Last line baseline" className="flex size-[22px] items-center justify-center"><TextAlignIcon mode="last" /></button>
            <button type="button" aria-label="Bounding box" className="flex size-[22px] items-center justify-center border border-[#a3a3a3] bg-white">
              <svg viewBox="0 0 20 20" className="size-5" aria-hidden="true">
                <path d="M3 3h2v2H3zM9 3h2v1H9zM15 3h2v2h-2zM3 9h1v2H3zM16 9h1v2h-1zM3 15h2v2H3zM9 16h2v1H9zM15 15h2v2h-2z" fill="#b5b5b5" />
                <text x="10" y="14.5" textAnchor="middle" fontSize="13" fontWeight="700" fill="#a5a5a5">A</text>
              </svg>
            </button>
          </div>
          <span className="ml-[9px] h-[22px] w-px bg-[#d0d0d0]" />
          <button type="button" aria-label="Outline" className="ml-[9px] flex size-[22px] items-center justify-center">
            <Icon><path d="M6.500 0v14M0 6.500h16" stroke="#c0c0c0" /><path d="M8 8h8v4h-4v4H8z" fill="#aaa" /></Icon>
          </button>
        </div>
      </div>
      <div className="bg-[#e8e8e8] px-1 pb-[7px]">
        <button type="button" aria-label="Collapse" className="flex h-3.5 w-full items-center justify-center"><Caret dir="up" /></button>
        <h3 className="mt-1.5 h-5 leading-4">Align objects to:</h3>
        <div className="flex gap-[15px]">
          <Btn label="Active objects" on>
            <Icon><path d="M6.500.5h9v9h-9z" fill="#ececec" stroke="#c4c4c4" /><path d="M3.500 3.500h9v9h-9z" fill="#ddd" stroke="#aaa" /><path d="M.5 6.500h9v9h-9z" fill="#e4e4e4" fillOpacity=".6" stroke="#b4b4b4" /></Icon>
          </Btn>
          <Btn label="Page edge">
            <Icon><path d="M.5.5h15v15H.5z" fill="#d8d8d8" stroke="#c4c4c4" /><path d="M8 1.500l2 2.500H6zM8 14.500l2-2.500H6zM1.500 8L4 6v4zM14.500 8L12 6v4z" fill="#a5a5a5" /></Icon>
          </Btn>
          <Btn label="Page center">
            <Icon><path d="M.5.5h15v15H.5z" fill="#d8d8d8" stroke="#c4c4c4" /><path d="M8 5l2-3H6zM8 11l2 3H6zM5 8L2 6v4zM11 8l3-2v4z" fill="#a5a5a5" /></Icon>
          </Btn>
          <Btn label="Grid">
            <Icon><path d="M.5.5h15v15H.5z" fill="#d8d8d8" stroke="#bbb" /><path d="M5.500 0v16M10.500 0v16M0 5.500h16M0 10.500h16" stroke="#b0b0b0" /></Icon>
          </Btn>
          <Btn label="Specified point">
            <Icon><path d="M.5.5h15v15H.5z" fill="#d8d8d8" stroke="#bbb" /><path d="M11.500 2v6M8.500 5h6" stroke="#999" /></Icon>
          </Btn>
        </div>
        <div className="mt-1.5 flex items-center border-b border-[#d0d0d0] pb-1.5">
          <div className="ml-10">
            {[["x:", '14.5 "'], ["y:", '9.0 "']].map(([k, v]) => (
              <label key={k} className="flex h-4 items-center">
                <span className="w-3.5">{k}</span>
                <span className="flex h-[17px] w-[153px] items-center border border-[#a5a5a5] bg-[#f3f3f3]">
                  <input defaultValue={v} className="h-full w-full min-w-0 bg-transparent pl-px text-[#555] outline-none" />
                  <Spin muted />
                </span>
              </label>
            ))}
          </div>
          <button type="button" aria-label="Pick point" className="ml-3.5">
            <Icon className="size-2.5"><circle cx="8" cy="8" r="6" stroke="#bbb" strokeWidth="1.500" /><path d="M8 3v10M3 8h10" stroke="#bbb" /></Icon>
          </button>
        </div>
        <h3 className="mt-1.5 h-5 leading-4">Distribute objects to:</h3>
        <div className="flex gap-[15px]">
          <Btn label="Extent of selection" on>
            <Icon>
              <path d="M1 1h2v2H1zM7 1h2v2H7zM13 1h2v2h-2zM1 13h2v2H1zM7 13h2v2H7zM13 13h2v2h-2zM0 7h1v2H0zM15 7h1v2h-1z" fill="#b0b0b0" />
              <path d="M3 8h10" stroke="#aaa" strokeWidth="1.500" /><path d="M2.500 8L6 5.500v5zM13.500 8L10 5.500v5z" fill="#aaa" />
            </Icon>
          </Btn>
          <Btn label="Extent of page">
            <Icon><path d="M.5.5h15v15H.5z" fill="#d8d8d8" stroke="#c4c4c4" /><path d="M3 8h10" stroke="#a5a5a5" strokeWidth="2" /><path d="M1 8l3-2v4zM15 8l-3-2v4z" fill="#a5a5a5" /></Icon>
          </Btn>
        </div>
      </div>
    </aside>
  );
}

function DockerTabs() {
  return (
    <div className="flex w-5 shrink-0 flex-col items-center border-l border-[#a9a9a9] bg-[#e8e8e8]">
      <div className="flex h-5 w-full items-center justify-center"><Slot /></div>
      <button type="button" className="flex w-full flex-col items-center gap-0.5 bg-[#b0b0b0] pb-3.5 pt-1">
        <Icon><path d="M1.500 0v14" stroke="#333" strokeDasharray="1 1" /><path d="M2.500 2.500h12v3h-12zM2.500 8.500h7v3h-7z" fill="#fff" stroke="#4c4f66" /></Icon>
        <span className="whitespace-nowrap leading-4 [writing-mode:vertical-rl]">Align and Distribute</span>
      </button>
      <span className="mt-4 flex"><RoundMark /></span>
    </div>
  );
}

const SWATCHES = [
  "#231f20", "#3f3f3f", "#58585a", "#6d6e70", "#7d8083", "#8a8d90", "#a0a2a4", "#b8babc", "#d0d1d2",
  "#e6e7e8", "#ffffff", "#2e3092", "#00adee", "#00a65c", "#ffee44", "#ff0032", "#ff0090", "#b23d84",
  "#ff7a33", "#ffa0a8", "#83695f", "#c7c3e0", "#9a94c4", "#6290c4", "#706bab", "#8078a4", "#456385",
  "#544a6c", "#5c7b95", "#0099d6", "#70d8f7", "#9cc0cc", "#7d99a5", "#5d7880", "#455860", "#3d6b68",
];

function ColorPalette() {
  return (
    <div className="flex w-[19px] shrink-0 flex-col items-center border-l border-[#d4d4d4] bg-[#f3f3f3]">
      <span className="mt-1 w-2.5 border-t-2 border-dotted border-[#bbb]" />
      <button type="button" aria-label="Palette menu" className="mt-1"><Side /></button>
      <button type="button" aria-label="Eyedropper" className="mt-[3px]"><Eyedropper dim /></button>
      <span className="mt-1 flex"><Slot /></span>
      <button type="button" aria-label="No color" className="mt-1"><NoColor /></button>
      <div className="flex min-h-0 w-full flex-1 flex-col overflow-hidden">
        {SWATCHES.map((c) => (
          <button
            key={c}
            type="button"
            aria-label={c}
            style={{ backgroundColor: c }}
            className="h-[17px] w-full shrink-0 border-b border-l border-[#4d5052]"
          />
        ))}
      </div>
      <span className="mt-[5px] flex"><Slot /></span>
      <svg viewBox="0 0 8 7" className="mb-3 mt-[9px] h-[7px] w-2" fill="none" stroke="#aaa" aria-hidden="true"><path d="M.5.5l3 3-3 3M4.500.5l3 3-3 3" /></svg>
    </div>
  );
}

/* ---------- status ---------- */

function StatusBar() {
  return (
    <footer className="flex h-[34px] shrink-0 items-center border-t border-[#d0d0d0] bg-[#f3f3f3] pl-1">
      <span className="mr-[3px] whitespace-pre">{"( 13.343, 2.425  )"}</span>
      <button type="button" aria-label="Status menu" className="flex size-3.5 items-center justify-center border border-black"><Side /></button>
      <div className="ml-auto flex items-center">
        <Icon>
          <path d="M1 1.500h14v11H1z" fill="#a9bfdc" stroke="#6a5a78" /><path d="M2 2h12v3H2z" fill="#c99aa4" />
          <circle cx="8" cy="7" r="3" fill="#fff" stroke="#222" /><circle cx="8" cy="7" r="1" fill="#222" /><path d="M4 14.500h8" stroke="#6c7fb0" strokeWidth="1.500" />
        </Icon>
        <Icon className="ml-[13px] size-4">
          <path d="M8 1L1 8.500 7.500 14l7-7z" fill="#fff" stroke="#4a4a55" strokeWidth="1.200" /><path d="M2 9h11l-5.500 5z" fill="#d87c1e" />
          <path d="M8 1v5" stroke="#444" /><path d="M13 6.500q3 3 1.500 7-1.500-1-1.500-7z" fill="#d87c1e" />
        </Icon>
        <span className="ml-[7px] flex"><NoColor /></span>
        <span className="ml-[3px] w-[161px]">None</span>
        <span className="h-[22px] w-px bg-[#d0d0d0]" />
        <Icon className="ml-[5px] size-4">
          <path d="M8 .5L4.500 7.500 6 12h4l1.500-4.500z" fill="#eee" stroke="#555" /><path d="M8 2v5" stroke="#555" /><circle cx="8" cy="8" r="1" fill="#555" /><path d="M5.500 13h5v2.500h-5z" fill="#666" />
        </Icon>
        <span className="ml-[5px] size-[17px] border border-[#777] bg-[#231f20]" />
        <span className="ml-[3px] w-[175px] whitespace-pre">{"C:0 M:0 Y:0 K:100  0.500 pt"}</span>
      </div>
    </footer>
  );
}

export default function App() {
  return (
    <div className="flex h-screen flex-col overflow-hidden bg-[#f3f3f3] font-['Open_Sans','Noto_Sans',sans-serif] text-[12px] leading-4 text-black">
      <TitleBar />
      <MenuBar />
      <StandardBar />
      <PropertyBar />
      <div className="flex min-h-0 flex-1">
        <Toolbox />
        <main className="flex min-w-0 flex-1 flex-col">
          <DocTabs />
          <TopRuler />
          <div className="flex min-h-0 flex-1">
            <SideRuler />
            <div className="flex min-w-0 flex-1 flex-col">
              <Canvas />
              <PageNav />
            </div>
          </div>
          <DocumentPalette />
          <Tray />
        </main>
        <div className="flex w-1.5 shrink-0 justify-center bg-white"><span className="w-px bg-[#c4c4c4]" /></div>
        <Docker />
        <DockerTabs />
        <ColorPalette />
      </div>
      <StatusBar />
    </div>
  );
}
